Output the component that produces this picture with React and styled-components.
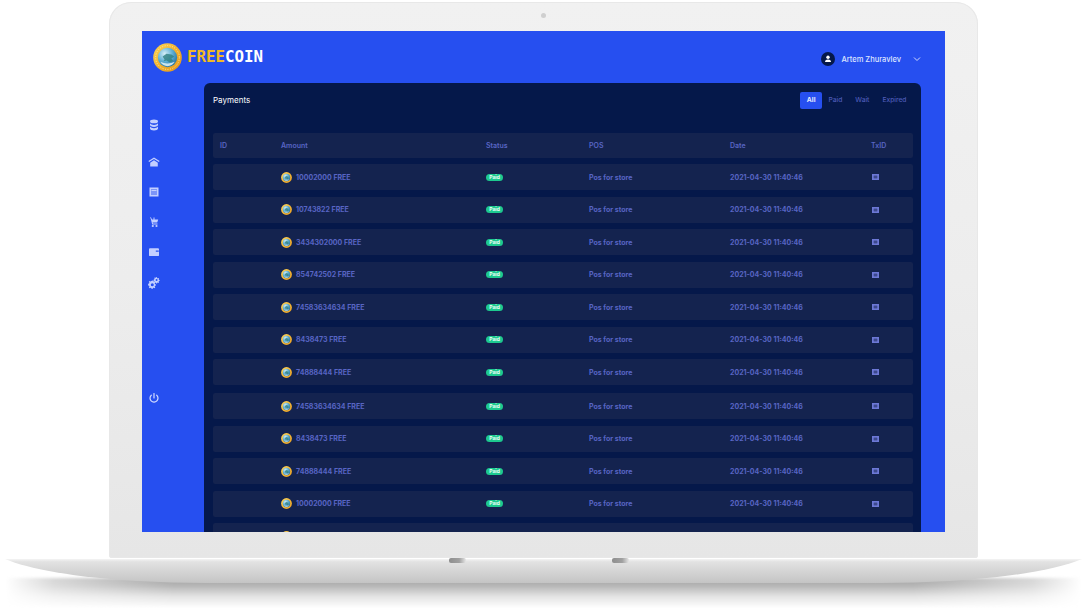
import React, { useId } from "react";
import styled, { createGlobalStyle } from "styled-components";

const Global = createGlobalStyle`
  html, body { margin: 0; padding: 0; background: #fff; }
  body { font-family: Inter, "Liberation Sans", sans-serif; overflow: hidden; }
  #root { width: 1087px; height: 610px; }
`;

const Stage = styled.div`
  width: 1087px;
  height: 610px;
  padding-top: 2px;
  box-sizing: border-box;
  background: #fff;
  overflow: hidden;
`;
const Lid = styled.div`
  position: relative;
  width: 869px;
  height: 556px;
  margin-left: 109px;
  box-sizing: border-box;
  padding: 29px 33px 0;
  border-radius: 22px 22px 3px 3px;
  background: linear-gradient(180deg, #f1f1f1 0%, #ededed 50%, #e6e6e6 100%);
  box-shadow: inset 0 0 0 1px #e8e8e8;
`;
const Camera = styled.div`
  position: absolute;
  left: 432px;
  top: 11px;
  width: 5px;
  height: 5px;
  border-radius: 50%;
  background: #cfcfcf;
`;
const Screen = styled.div`
  width: 803px;
  height: 501px;
  background: #264ff0;
  overflow: hidden;
  filter: blur(0.3px);
`;
const TopBar = styled.header`
  height: 52px;
  display: flex;
  justify-content: space-between;
  padding: 12px 24px 0 11px;
  box-sizing: border-box;
`;
const Brand = styled.div`
  display: flex;
  align-items: flex-start;
  gap: 5px;
`;
const BrandName = styled.div`
  margin-top: 6px;
  font: 700 15.800px/1 "DejaVu Sans Mono", monospace;
  color: #f1ba25;
  span { color: #fff; }
`;
const User = styled.div`
  display: flex;
  align-items: center;
  height: 32px;
  color: #dfe5ff;
  font-size: 7.500px;
  font-weight: 500;
`;
const Avatar = styled.div`
  width: 14px;
  height: 14px;
  border-radius: 50%;
  background: #05184a;
  display: flex;
  align-items: center;
  justify-content: center;
  margin-right: 6px;
`;
const Chevron = styled.svg`
  width: 8px;
  height: 6px;
  margin-left: 12px;
  fill: none;
  stroke: #cfd8ff;
  stroke-width: 1;
`;
const Body = styled.div`
  display: flex;
`;
const Sidebar = styled.nav`
  width: 62px;
  flex: none;
  box-sizing: border-box;
  padding: 36px 0 0 6px;
  display: flex;
  flex-direction: column;
  gap: 18px;
`;
const NavIcon = styled.svg`
  width: 12px;
  height: 12px;
  flex: none;
  fill: #c3cfff;
  margin-top: ${(p) => p.$before || 0}px;
  margin-bottom: ${(p) => p.$after || 0}px;
`;
const PowerIcon = styled(NavIcon)`
  fill: none;
  stroke: #d5ddff;
  stroke-width: 1.200;
  stroke-linecap: round;
`;
const Panel = styled.main`
  width: 717px;
  height: 460px;
  box-sizing: border-box;
  padding: 9px 8px 0 9px;
  background: #05184a;
  border-radius: 6px 6px 0 0;
`;
const PanelHead = styled.div`
  display: flex;
  justify-content: space-between;
  align-items: center;
  height: 17px;
  margin-bottom: 24px;
`;
const Title = styled.h2`
  margin: 0 0 1px;
  color: #fff;
  font-size: 8px;
  font-weight: 400;
`;
const Tabs = styled.div`
  display: flex;
`;
const Tab = styled.div`
  height: 17px;
  padding: 0 6.500px;
  line-height: 17px;
  border-radius: 2px;
  font-size: 6.700px;
  font-weight: ${(p) => (p.$active ? 700 : 500)};
  color: ${(p) => (p.$active ? "#e4e9ff" : "#4d5bb8")};
  background: ${(p) => (p.$active ? "#264ff0" : "transparent")};
  ${(p) => (p.$active ? "width: 21.500px; padding: 0; text-align: center;" : "")}
`;
const columns = "61px 205px 103px 141px 141px 1fr";
const HeadRow = styled.div`
  display: grid;
  grid-template-columns: ${columns};
  align-items: center;
  height: 25px;
  padding-left: 7px;
  margin-bottom: 6px;
  border-radius: 2px;
  background: #14234f;
  color: #5865c4;
  font-size: 7px;
  font-weight: 600;
`;
const Rows = styled.div`
  display: flex;
  flex-direction: column;
  gap: 6.500px;
`;
const Row = styled.div`
  display: grid;
  grid-template-columns: ${columns};
  align-items: center;
  height: 26px;
  flex: none;
  padding-left: 7px;
  margin-top: ${(p) => p.$shift || 0}px;
  border-radius: 2px;
  background: #14234f;
  color: #5865c4;
  font-size: 7px;
  font-weight: 700;
`;
const AmountCell = styled.div`
  display: flex;
  align-items: center;
  gap: 4px;
`;
const Badge = styled.span`
  justify-self: start;
  height: 7px;
  width: 17px;
  border-radius: 4px;
  background: #1dc98f;
  color: #ecfff8;
  font-size: 5px;
  font-weight: 700;
  line-height: 7px;
  text-align: center;
`;
const TxIcon = styled.svg`
  width: 7px;
  height: 6px;
  margin-left: 1px;
  fill: #6c78d6;
`;
const BaseArt = styled.svg`
  display: block;
  width: 1087px;
  height: 52px;
`;

function Coin({ size }) {
  const id = useId();
  return (
    <svg width={size} height={size} viewBox="0 0 30 30" style={{ flex: "none" }}>
      <defs>
        <linearGradient id={id + "g"} x1="0" y1="0" x2="1" y2="1">
          <stop offset="0" stopColor="#fbd65c" />
          <stop offset="0.55" stopColor="#f1ae2a" />
          <stop offset="1" stopColor="#e2951a" />
        </linearGradient>
        <radialGradient id={id + "b"} cx="0.35" cy="0.3" r="0.8">
          <stop offset="0" stopColor="#d4eef6" />
          <stop offset="0.5" stopColor="#5fb0d6" />
          <stop offset="1" stopColor="#1c6a9a" />
        </radialGradient>
      </defs>
      <circle cx="15" cy="15" r="14.800" fill={`url(#${id}g)`} />
      <circle cx="15" cy="15" r="12.300" fill="none" stroke="#fff0b0" strokeWidth="0.9" strokeDasharray="1 1.600" />
      <circle cx="15" cy="15" r="10" fill={`url(#${id}b)`} />
      <path d="M10 14l4-3 5 1 3 2-3 2 2 3-4 1-3-2-3 1 1-2-2-3z" fill="#2f7f7f" opacity="0.8" />
      <path d="M7.500 19.500q7.500 3.500 15 0q-3 4.500-7.500 4.500t-7.500-4.500z" fill="#e4f4f6" opacity="0.85" />
    </svg>
  );
}

const data = [
  "10002000", "10743822", "3434302000", "854742502", "74583634634", "8438473",
  "74888444", "74583634634", "8438473", "74888444", "10002000", "10743822",
];

const Database = () => (
  <NavIcon viewBox="0 0 12 12" $after={7}>
    <ellipse cx="6" cy="2.400" rx="4" ry="1.900" />
    <path d="M2 4.200c.8 1.200 2.300 1.700 4 1.700s3.200-.5 4-1.700v1.900c0 1-1.800 1.900-4 1.900s-4-.9-4-1.900z" />
    <path d="M2 7.600c.8 1.200 2.300 1.700 4 1.700s3.200-.5 4-1.700v1.800c0 1.100-1.800 2-4 2s-4-.9-4-2z" />
  </NavIcon>
);
const Bank = () => (
  <NavIcon viewBox="0 0 12 12">
    <path d="M6 1.500L.4 5l.7 1L6 3l4.900 3 .7-1z" />
    <path d="M2.200 6.700L6 4.300l3.800 2.400v3.800H2.200z" />
  </NavIcon>
);
const Sheet = () => (
  <NavIcon viewBox="0 0 12 12">
    <path fillRule="evenodd" d="M1.500 1.500h9v9h-9zM3 3v6h6V3z" />
    <rect x="3" y="3" width="6" height="6" opacity="0.55" />
    <rect x="3.500" y="4" width="5" height="1" />
  </NavIcon>
);
const Cart = () => (
  <NavIcon viewBox="0 0 12 12">
    <path d="M2 1l1 .4 1 2h1.500V1.500h1V3.400H9l1.200.2-1 3H4.600l.4 1h4.500v1H4.200L2.800 3z" />
    <circle cx="4.800" cy="10" r="1.100" />
    <circle cx="8.500" cy="10" r="1.100" />
  </NavIcon>
);
const Wallet = () => (
  <NavIcon viewBox="0 0 12 12">
    <path fillRule="evenodd" d="M1 3.200c0-.5.400-.9.900-.9h8.200c.5 0 .9.400.9.900v6c0 .5-.4.900-.9.900H1.900c-.5 0-.9-.4-.9-.9zM7.800 4.400v1.400h3v-1.400z" />
  </NavIcon>
);
const Gears = () => (
  <NavIcon viewBox="0 0 12 12" $before={1} $after={85}>
    <path fillRule="evenodd" d="M4.600 3.600l.9.200.4 1 1-.2.500.9-.7.800.4.900.9.300v1l-1 .3-.3.900.6.800-.7.700-.9-.5-.9.400-.2 1H3.600l-.2-1-.9-.4-.8.500-.8-.7.500-.9-.3-.9-1-.2V6.700l1-.3.3-.9-.6-.8.7-.8.9.500.9-.4zM4.300 6.200a1.500 1.500 0 100 3 1.500 1.500 0 000-3z" />
    <path fillRule="evenodd" d="M9 .6l.3.700.6.100.6-.4.600.600-.4.600.2.600.7.200v.9l-.7.200-.2.600.4.600-.6.600-.6-.4-.6.200-.2.700h-.9l-.2-.7-.6-.2-.6.400-.6-.6.400-.6-.2-.6-.7-.2V2.400l.7-.2.2-.6-.4-.6.600-.6.600.400.600-.2.200-.700zM8.600 2.100a1 1 0 100 2 1 1 0 000-2z" />
  </NavIcon>
);
const Power = () => (
  <PowerIcon viewBox="0 0 12 12">
    <path d="M6 1.500V6" />
    <path d="M3.300 3.200a4 4 0 105.400 0" />
  </PowerIcon>
);

export default function App() {
  return (
    <Stage>
      <Global />
      <Lid>
        <Camera />
        <Screen>
          <TopBar>
            <Brand>
              <Coin size={29} />
              <BrandName>FREE<span>COIN</span></BrandName>
            </Brand>
            <User>
              <Avatar>
                <svg width="8" height="8" viewBox="0 0 8 8" fill="#fff">
                  <circle cx="4" cy="2.300" r="1.700" />
                  <path d="M1 7c0-1.700 1.300-2.500 3-2.500S7 5.300 7 7z" />
                </svg>
              </Avatar>
              Artem Zhuravlev
              <Chevron viewBox="0 0 8 6"><path d="M1 1.500l3 3 3-3" /></Chevron>
            </User>
          </TopBar>
          <Body>
            <Sidebar>
              <Database />
              <Bank />
              <Sheet />
              <Cart />
              <Wallet />
              <Gears />
              <Power />
            </Sidebar>
            <Panel>
              <PanelHead>
                <Title>Payments</Title>
                <Tabs>
                  <Tab $active>All</Tab>
                  <Tab>Paid</Tab>
                  <Tab>Wait</Tab>
                  <Tab>Expired</Tab>
                </Tabs>
              </PanelHead>
              <HeadRow>
                <div>ID</div>
                <div>Amount</div>
                <div>Status</div>
                <div>POS</div>
                <div>Date</div>
                <div>TxID</div>
              </HeadRow>
              <Rows>
                {data.map((amount, i) => (
                  <Row key={i} $shift={i === 7 ? 1.500 : 0}>
                    <div />
                    <AmountCell><Coin size={11} />{amount} FREE</AmountCell>
                    <Badge>Paid</Badge>
                    <div>Pos for store</div>
                    <div>2021-04-30 11:40:46</div>
                    <TxIcon viewBox="0 0 7 6">
                      <path fillRule="evenodd" d="M0 0h7v6H0zM1.800 1.800v2.400h3.400V1.800z" />
                      <rect x="1.800" y="1.800" width="3.400" height="2.400" opacity="0.45" />
                    </TxIcon>
                  </Row>
                ))}
              </Rows>
            </Panel>
          </Body>
        </Screen>
      </Lid>
      <BaseArt viewBox="0 0 1087 52">
        <defs>
          <linearGradient id="baseFill" x1="0" y1="0" x2="0" y2="1">
            <stop offset="0" stopColor="#f4f4f4" />
            <stop offset="0.12" stopColor="#e2e2e2" />
            <stop offset="1" stopColor="#c4c4c4" />
          </linearGradient>
          <linearGradient id="shadowFill" x1="0" y1="0" x2="0" y2="1">
            <stop offset="0" stopColor="#a6a6a6" />
            <stop offset="0.25" stopColor="#b4b4b4" />
            <stop offset="0.6" stopColor="#e2e2e2" />
            <stop offset="1" stopColor="#ffffff" />
          </linearGradient>
          <linearGradient id="fadeX" x1="0" y1="0" x2="1" y2="0">
            <stop offset="0.005" stopColor="#000" />
            <stop offset="0.05" stopColor="#777" />
            <stop offset="0.16" stopColor="#fff" />
            <stop offset="0.84" stopColor="#fff" />
            <stop offset="0.95" stopColor="#777" />
            <stop offset="0.995" stopColor="#000" />
          </linearGradient>
          <mask id="shadowMask" maskUnits="userSpaceOnUse" x="0" y="0" width="1087" height="52">
            <rect x="0" y="0" width="1087" height="52" fill="url(#fadeX)" />
          </mask>
          <linearGradient id="notch" x1="0" y1="0" x2="1" y2="0">
            <stop offset="0" stopColor="#8e8e8e" />
            <stop offset="0.6" stopColor="#a0a0a0" />
            <stop offset="1" stopColor="#e6e6e6" />
          </linearGradient>
          <filter id="soft" x="-5%" y="-50%" width="110%" height="200%">
            <feGaussianBlur stdDeviation="1.500" />
          </filter>
        </defs>
        <g mask="url(#shadowMask)">
          <rect x="0" y="20" width="1087" height="30" fill="url(#shadowFill)" filter="url(#soft)" />
        </g>
        <path d="M5 1H1082C1058 11 1015 19 950 23Q915 25 880 25H207Q172 25 137 23C72 19 29 11 5 1z" fill="url(#baseFill)" />
        <rect x="449" y="0" width="17" height="5" rx="2" fill="url(#notch)" />
        <rect x="612" y="0" width="17" height="5" rx="2" fill="url(#notch)" />
      </BaseArt>
    </Stage>
  );
}
